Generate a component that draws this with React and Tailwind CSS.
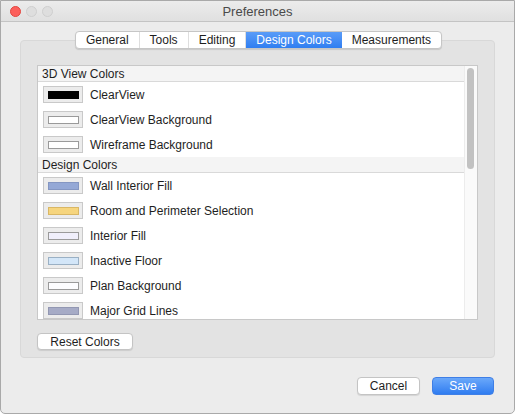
import React from 'react';

const tabs = ['General', 'Tools', 'Editing', 'Design Colors', 'Measurements'];

const sections = [
    {
        title: '3D View Colors',
        items: [
            { name: 'ClearView', color: '#000000', edge: '#000000' },
            { name: 'ClearView Background', color: '#ffffff', edge: '#9a9a9a' },
            { name: 'Wireframe Background', color: '#ffffff', edge: '#9a9a9a' },
        ],
    },
    {
        title: 'Design Colors',
        items: [
            { name: 'Wall Interior Fill', color: '#94a8d6', edge: '#8496c2' },
            { name: 'Room and Perimeter Selection', color: '#f6d57e', edge: '#d9b765' },
            { name: 'Interior Fill', color: '#f0effb', edge: '#9a9a9a' },
            { name: 'Inactive Floor', color: '#d3e6f8', edge: '#9ab0c4' },
            { name: 'Plan Background', color: '#fdfdff', edge: '#9a9a9a' },
            { name: 'Major Grid Lines', color: '#a6abc6', edge: '#9297b2' },
        ],
    },
];

const ColorRow = ({ item }) => (
    <div className="flex h-[25px] items-center">
        <div className="ml-[5px] flex h-[17px] w-[40px] items-center justify-center border border-[#c9c9c9] bg-[#ececec]">
            <div
                className="h-[8px] w-[31px] border"
                style={{ backgroundColor: item.color, borderColor: item.edge }}
            />
        </div>
        <span className="ml-[7px] text-[12px] text-[#1e1e1e]">{item.name}</span>
    </div>
);

const App = () => {
    return (
        <div
            className="flex h-[414px] w-[515px] flex-col overflow-hidden rounded-b-[5px] border border-[#a9a9a9] bg-[#ececec]"
            style={{ fontFamily: '"Liberation Sans", Arial, sans-serif' }}
        >
            {/* Title bar */}
            <div className="relative flex h-[21px] shrink-0 items-center justify-center border-b border-[#c4c4c4] bg-gradient-to-b from-[#ececec] to-[#e0e0e0]">
                <div className="absolute left-[9px] top-[5px] flex gap-[5px]">
                    <span className="h-[11px] w-[11px] rounded-full border border-[#e2463f] bg-[#fc605c]" />
                    <span className="h-[11px] w-[11px] rounded-full border border-[#cfcfcf] bg-[#dedede]" />
                    <span className="h-[11px] w-[11px] rounded-full border border-[#cfcfcf] bg-[#dedede]" />
                </div>
                <span className="pt-[1px] text-[13px] text-[#4a4a4a]">Preferences</span>
            </div>

            {/* Body */}
            <div className="flex flex-1 flex-col px-[19px] pt-[9px]">
                <div className="relative z-10 flex justify-center pl-[2px]">
                    <div className="flex h-[18px] overflow-hidden rounded-[4px] border border-[#c6c6c6] bg-white text-[12px] shadow-[0_1px_1px_rgba(0,0,0,0.12)]">
                        {tabs.map((tab) => (
                            <div
                                key={tab}
                                className={
                                    tab === 'Design Colors'
                                        ? 'flex items-center bg-gradient-to-b from-[#5a9cf8] to-[#2f7ef1] px-[10px] text-white'
                                        : 'flex items-center border-r border-[#dedede] px-[10px] text-[#1e1e1e] last:border-r-0'
                                }
                            >
                                {tab}
                            </div>
                        ))}
                    </div>
                </div>

                {/* Group box */}
                <div className="-mt-[9px] flex h-[318px] shrink-0 flex-col rounded-[4px] border border-[#d8d8d8] bg-[#e3e3e3] px-[16px] pt-[24px]">
                    <div className="flex h-[255px] shrink-0 border border-[#c8c8c8] bg-white">
                        <div className="flex-1 overflow-hidden">
                            {sections.map((section) => (
                                <div key={section.title}>
                                    <div className="flex h-[16px] items-center border-b border-[#d9d9d9] bg-[#f4f4f4] pl-[4px] text-[12px] text-[#1e1e1e]">
                                        {section.title}
                                    </div>
                                    {section.items.map((item) => (
                                        <ColorRow key={item.name} item={item} />
                                    ))}
                                </div>
                            ))}
                        </div>
                        {/* Scroll track */}
                        <div className="w-[13px] shrink-0 border-l border-[#ececec] bg-[#fafafa] pl-[2px] pt-[2px]">
                            <div className="h-[101px] w-[7px] rounded-full bg-[#c2c2c2]" />
                        </div>
                    </div>

                    <div className="mt-[13px] flex">
                        <button className="h-[17px] w-[96px] rounded-[4px] border border-[#c4c4c4] bg-white text-[12px] leading-none text-[#1e1e1e] shadow-[0_1px_1px_rgba(0,0,0,0.1)]">
                            Reset Colors
                        </button>
                    </div>
                </div>

                {/* Footer buttons */}
                <div className="mt-[19px] flex justify-end gap-[12px] pr-[1px]">
                    <button className="h-[18px] w-[63px] rounded-[4px] border border-[#c4c4c4] bg-white text-[12px] leading-none text-[#1e1e1e] shadow-[0_1px_1px_rgba(0,0,0,0.1)]">
                        Cancel
                    </button>
                    <button className="h-[18px] w-[62px] rounded-[4px] border border-[#3f7fe6] bg-gradient-to-b from-[#6aa8fa] to-[#2f7cf0] text-[12px] leading-none text-white">
                        Save
                    </button>
                </div>
            </div>
        </div>
    );
};

export default App;
